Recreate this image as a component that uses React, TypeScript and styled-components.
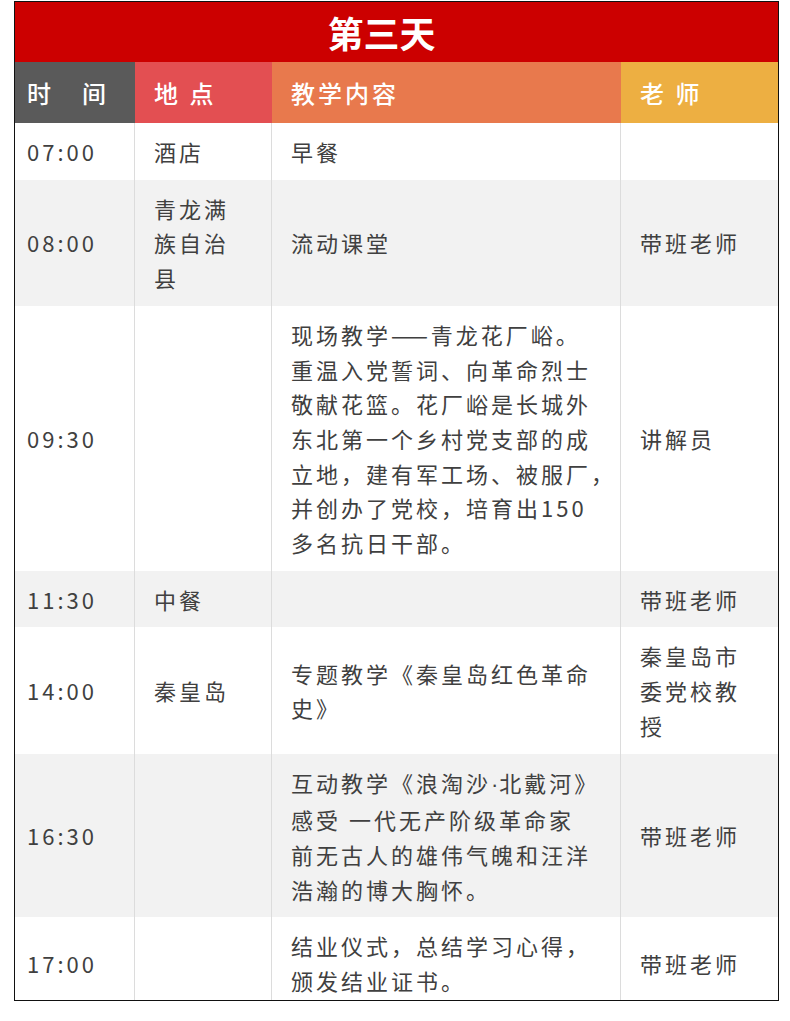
import React from 'react';
import styled, { createGlobalStyle } from 'styled-components';

const GlobalStyle = createGlobalStyle`
    html, body {
        margin: 0;
        padding: 0;
        background: #ffffff;
    }
    body {
        font-family: "Noto Sans CJK SC", "Noto Sans", sans-serif;
    }
`;

const COLUMNS = '120px 137px 349px 157px';

// ---------------- <Schedule /> --------------------------------------

const Schedule = styled.div`
    box-sizing: border-box;
    width: 765px;
    height: 1000px;
    margin: 1px 0 0 14px;
    border: 1px solid #111;
    overflow: hidden;
`;

// ---------------- <Title /> --------------------------------------

const Title = styled.div`
    height: 60px;
    display: flex;
    align-items: center;
    justify-content: center;
    padding-right: 30px;
    background: #cc0000;
    color: #ffffff;
    font-size: 36px;
    font-weight: 700;
    line-height: 1;
`;

// ---------------- <HeadRow /> --------------------------------------

const HeadRow = styled.div`
    display: grid;
    grid-template-columns: ${COLUMNS};
    height: 61px;
`;

const HeadCell = styled.div<{ $bg: string; $first?: boolean }>`
    display: flex;
    align-items: center;
    padding-left: ${p => (p.$first ? '12px' : '19px')};
    background: ${p => p.$bg};
    color: #ffffff;
    font-size: 24px;
    font-weight: 500;
    letter-spacing: 3px;
    white-space: pre;
`;

const Gap = styled.span`
    display: inline-block;
    width: 28px;
`;

// ---------------- <Row /> --------------------------------------

const Row = styled.div<{ $shade?: boolean }>`
    display: grid;
    grid-template-columns: ${COLUMNS};
    background: ${p => (p.$shade ? '#f2f2f2' : '#ffffff')};
`;

const Cell = styled.div<{ $first?: boolean }>`
    display: flex;
    align-items: center;
    padding: 11px 8px 11px ${p => (p.$first ? '12px' : '19px')};
    border-right: 1px solid #dcdcdc;
    color: #404040;
    font-size: 22px;
    line-height: 34.7px;
    letter-spacing: 3px;
    white-space: nowrap;

    &:last-child {
        border-right: none;
    }
`;

const Dot = styled.span`
    font-family: "Liberation Sans", sans-serif;
    letter-spacing: 1px;
`;

const Lines = ({ text }: { text: string }) => {
    const parts = text.split('\n');
    return (
        <span>
            {parts.map((t, i) => (
                <React.Fragment key={i}>
                    {t.split('·').map((s, j) => (
                        <React.Fragment key={j}>
                            {j > 0 && <Dot>·</Dot>}
                            {s}
                        </React.Fragment>
                    ))}
                    {i < parts.length - 1 && <br />}
                </React.Fragment>
            ))}
        </span>
    );
};

interface Item {
    time: string;
    place: string;
    content: string;
    teacher: string;
}

const items: Item[] = [
    { time: '07:00', place: '酒店', content: '早餐', teacher: '' },
    { time: '08:00', place: '青龙满\n族自治\n县', content: '流动课堂', teacher: '带班老师' },
    {
        time: '09:30',
        place: '',
        content:
            '现场教学——青龙花厂峪。\n重温入党誓词、向革命烈士\n敬献花篮。花厂峪是长城外\n东北第一个乡村党支部的成\n立地，建有军工场、被服厂，\n并创办了党校，培育出150\n多名抗日干部。',
        teacher: '讲解员',
    },
    { time: '11:30', place: '中餐', content: '', teacher: '带班老师' },
    { time: '14:00', place: '秦皇岛', content: '专题教学《秦皇岛红色革命\n史》', teacher: '秦皇岛市\n委党校教\n授' },
    {
        time: '16:30',
        place: '',
        content: '互动教学《浪淘沙·北戴河》\n感受 一代无产阶级革命家\n前无古人的雄伟气魄和汪洋\n浩瀚的博大胸怀。',
        teacher: '带班老师',
    },
    { time: '17:00', place: '', content: '结业仪式，总结学习心得，\n颁发结业证书。', teacher: '带班老师' },
];

export default function App() {
    return (
        <>
            <GlobalStyle />
            <Schedule>
                <Title>第三天</Title>
                <HeadRow>
                    <HeadCell $bg="#5a5a5a" $first>时<Gap />间</HeadCell>
                    <HeadCell $bg="#e34f52">地 点</HeadCell>
                    <HeadCell $bg="#e8794d">教学内容</HeadCell>
                    <HeadCell $bg="#edaf42">老 师</HeadCell>
                </HeadRow>
                {items.map((it, i) => (
                    <Row key={it.time} $shade={i % 2 === 1}>
                        <Cell $first>{it.time}</Cell>
                        <Cell><Lines text={it.place} /></Cell>
                        <Cell><Lines text={it.content} /></Cell>
                        <Cell><Lines text={it.teacher} /></Cell>
                    </Row>
                ))}
            </Schedule>
        </>
    );
}
